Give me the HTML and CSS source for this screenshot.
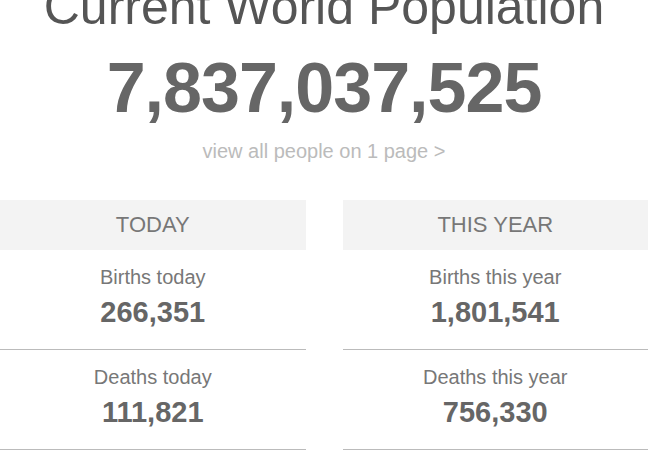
FILE: index.html
```html
<!DOCTYPE html>
<html lang="en">
<head>
<meta charset="utf-8">
<title>Current World Population</title>
<link rel="stylesheet" href="styles.css">
</head>
<body>
<div class="page">
  <h1 class="title">Current World Population</h1>
  <div class="counter">7,837,037,525</div>
  <a class="view-all" href="#">view all people on 1 page &gt;</a>
  <div class="cols">
    <section class="col">
      <div class="col-head">TODAY</div>
      <div class="row">
        <div class="label">Births today</div>
        <div class="num">266,351</div>
      </div>
      <div class="row">
        <div class="label">Deaths today</div>
        <div class="num">111,821</div>
      </div>
    </section>
    <section class="col">
      <div class="col-head">THIS YEAR</div>
      <div class="row">
        <div class="label">Births this year</div>
        <div class="num">1,801,541</div>
      </div>
      <div class="row">
        <div class="label">Deaths this year</div>
        <div class="num">756,330</div>
      </div>
    </section>
  </div>
</div>
</body>
</html>
```
FILE: styles.css
```css
html, body {
  margin: 0;
  padding: 0;
  background: #fff;
}
body {
  font-family: "Liberation Sans", Arial, sans-serif;
  overflow: hidden;
}
.page {
  width: 648px;
  display: flex;
  flex-direction: column;
  align-items: center;
  text-align: center;
}
.title {
  margin: -22px 0 0;
  font-size: 50px;
  line-height: 58px;
  font-weight: normal;
  color: #555;
}
.counter {
  margin-top: 12px;
  font-size: 70px;
  line-height: 80px;
  font-weight: bold;
  color: #666;
  letter-spacing: -1px;
}
.view-all {
  margin-top: 11px;
  font-size: 20px;
  line-height: 24px;
  color: #bbb;
  text-decoration: none;
}
.cols {
  margin-top: 37px;
  width: 100%;
  display: grid;
  grid-template-columns: 1fr 1fr;
  column-gap: 37px;
}
.col-head {
  height: 50px;
  line-height: 50px;
  background: #f3f3f3;
  font-size: 22px;
  color: #777;
}
.row {
  padding: 15px 0 20px;
  border-bottom: 1px solid #bbb;
}
.label {
  font-size: 20px;
  line-height: 24px;
  color: #777;
}
.num {
  margin-top: 6px;
  font-size: 29px;
  line-height: 34px;
  font-weight: bold;
  color: #666;
}
```
